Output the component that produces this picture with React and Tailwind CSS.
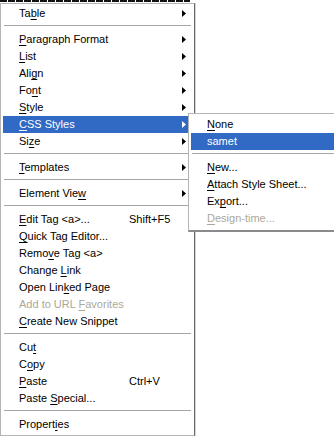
import React from "react";

const FONT = { fontFamily: '"Liberation Sans", Arial, sans-serif' };

function Label({ text, u }) {
  if (u === undefined || u < 0) return <>{text}</>;
  return (
    <>
      {text.slice(0, u)}
      <span className="underline underline-offset-[2px] decoration-[1px]">{text[u]}</span>
      {text.slice(u + 1)}
    </>
  );
}

function Arrow({ white }) {
  return (
    <svg width="4" height="7" viewBox="0 0 4 7" className="shrink-0">
      <polygon points="0,0 4,3.5 0,7" fill={white ? "#ffffff" : "#000000"} />
    </svg>
  );
}

function Item({ text, u, arrow, shortcut, active, disabled }) {
  return (
    <div
      className={
        "flex h-[17px] items-center pl-[16px] pr-[6px] text-[11px] leading-[17px] whitespace-nowrap " +
        (active ? "bg-[#316ac5] text-white" : disabled ? "text-[#aca899]" : "text-black")
      }
    >
      <span className="w-[110px] shrink-0">
        <Label text={text} u={u} />
      </span>
      {shortcut && <span>{shortcut}</span>}
      {arrow && (
        <span className="ml-auto flex items-center">
          <Arrow white={active} />
        </span>
      )}
    </div>
  );
}

function Sep() {
  return (
    <div className="h-[9px] pt-[3px] px-[1px]">
      <div className="h-[1px] bg-[#a6a6a6]" />
    </div>
  );
}

const main = [
  { text: "Table", u: 2, arrow: true },
  "sep",
  { text: "Paragraph Format", u: 0, arrow: true },
  { text: "List", u: 0, arrow: true },
  { text: "Align", u: 3, arrow: true },
  { text: "Font", u: 2, arrow: true },
  { text: "Style", u: 0, arrow: true },
  { text: "CSS Styles", u: 0, arrow: true, active: true },
  { text: "Size", u: 2, arrow: true },
  "sep",
  { text: "Templates", u: 0, arrow: true },
  "sep",
  { text: "Element View", u: 11, arrow: true },
  "sep",
  { text: "Edit Tag <a>...", u: 0, shortcut: "Shift+F5" },
  { text: "Quick Tag Editor...", u: 0 },
  { text: "Remove Tag <a>", u: 4 },
  { text: "Change Link", u: 7 },
  { text: "Open Linked Page", u: 8 },
  { text: "Add to URL Favorites", u: 11, disabled: true },
  { text: "Create New Snippet", u: 0 },
  "sep",
  { text: "Cut", u: 2 },
  { text: "Copy", u: 1 },
  { text: "Paste", u: 0, shortcut: "Ctrl+V" },
  { text: "Paste Special...", u: 6 },
  "sep",
  { text: "Properties", u: 7 },
];

const sub = [
  { text: "None", u: 0 },
  { text: "samet", active: true },
  "sep",
  { text: "New...", u: 0 },
  { text: "Attach Style Sheet...", u: 0 },
  { text: "Export...", u: 2 },
  { text: "Design-time...", u: 0, disabled: true },
];

export default function App() {
  return (
    <div className="relative h-[436px] w-[334px] overflow-hidden bg-white" style={FONT}>
      <div className="h-[2px] w-[190px] bg-[repeating-linear-gradient(90deg,#111_0_7px,#fff_7px_8px)]" />
      <div className="mt-[1px] w-[195px] border-l border-t border-b border-r border-l-[#b4b4b4] border-t-[#b4b4b4] border-b-[#b4b4b4] border-r-[#6a6a6a] pl-[2px] pr-[2px] pt-[1px] pb-[2px] shadow-[1px_0_0_#d4d4d4]">
        {main.map((m, i) => (m === "sep" ? <Sep key={i} /> : <Item key={i} {...m} />))}
      </div>
      <div className="absolute left-[188px] top-[113px] w-[170px] border-l border-t border-b-2 border-l-[#b4b4b4] border-t-[#b4b4b4] border-b-[#8a8a8a] bg-white pl-[2px] pt-[2px] pb-[3px]">
        {sub.map((m, i) => (m === "sep" ? <Sep key={i} /> : <Item key={i} {...m} />))}
      </div>
    </div>
  );
}
